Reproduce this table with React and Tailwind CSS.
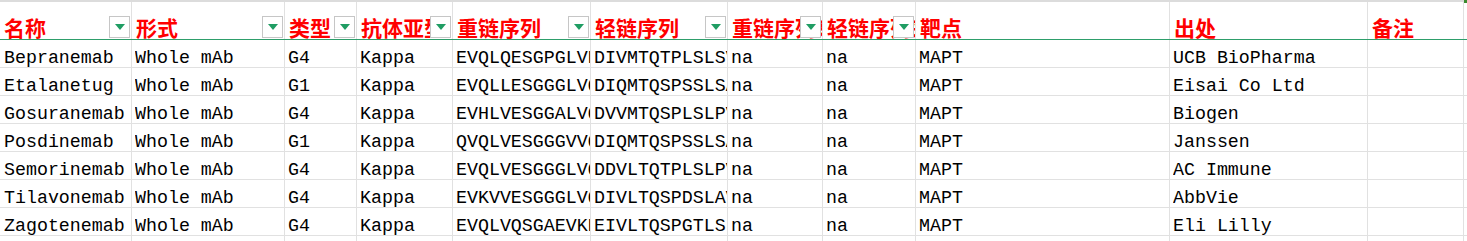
import React from "react";

const headers = [
  { label: "名称", filter: true },
  { label: "形式", filter: true },
  { label: "类型", filter: true },
  { label: "抗体亚型", filter: true },
  { label: "重链序列", filter: true },
  { label: "轻链序列", filter: true },
  { label: "重链序列来源", filter: true },
  { label: "轻链序列来源", filter: true },
  { label: "靶点", filter: false },
  { label: "出处", filter: false },
  { label: "备注", filter: false },
];

const rows = [
  ["Bepranemab", "Whole mAb", "G4", "Kappa", "EVQLQESGPGLVKPSETLSLTCTVSG", "DIVMTQTPLSLSVTPGQPASISCRSS", "na", "na", "MAPT", "UCB BioPharma", ""],
  ["Etalanetug", "Whole mAb", "G1", "Kappa", "EVQLLESGGGLVQPGGSLRLSCAASG", "DIQMTQSPSSLSASVGDRVTITCRAS", "na", "na", "MAPT", "Eisai Co Ltd", ""],
  ["Gosuranemab", "Whole mAb", "G4", "Kappa", "EVHLVESGGALVQPGGSLRLSCAASG", "DVVMTQSPLSLPVTLGQPASISCRSS", "na", "na", "MAPT", "Biogen", ""],
  ["Posdinemab", "Whole mAb", "G1", "Kappa", "QVQLVESGGGVVQPGRSLRLSCAASG", "DIQMTQSPSSLSASVGDRVTITCRAS", "na", "na", "MAPT", "Janssen", ""],
  ["Semorinemab", "Whole mAb", "G4", "Kappa", "EVQLVESGGGLVQPGGSLRLSCAASG", "DDVLTQTPLSLPVNLGDQASISCRSS", "na", "na", "MAPT", "AC Immune", ""],
  ["Tilavonemab", "Whole mAb", "G4", "Kappa", "EVKVVESGGGLVQPGGSMKLSCVASG", "DIVLTQSPDSLAVSLGERATINCKSS", "na", "na", "MAPT", "AbbVie", ""],
  ["Zagotenemab", "Whole mAb", "G4", "Kappa", "EVQLVQSGAEVKKPGSSVKVSCKASG", "EIVLTQSPGTLSLSPGERATLSCRAS", "na", "na", "MAPT", "Eli Lilly", ""],
];

const grid =
  "grid grid-cols-[132px_153px_72px_96px_138px_137px_95px_93px_254px_198px_96px_3px]";

function FilterButton() {
  return (
    <div className="absolute right-[1px] bottom-[1px] w-[21px] h-[22px] bg-white border border-[#c6c6c6] flex items-center justify-center">
      <svg width="10" height="6" viewBox="0 0 10 6">
        <path d="M0 0 L10 0 L5 6 Z" fill="#1f9d63" />
      </svg>
    </div>
  );
}

export default function App() {
  return (
    <div className="w-[1467px] h-[241px] overflow-hidden bg-white">
      {/* header */}
      <div className={`${grid} h-[40px] border-t-2 border-[#dcdcdc] border-b border-b-[#2e9e6b]`}>
        {headers.map((h, i) => (
          <div
            key={i}
            className="relative overflow-hidden whitespace-nowrap border-r border-[#e1e1e1] flex items-end pl-[4px]"
          >
            <span className="text-[21px] leading-[24px] font-bold text-[#ff0000] font-['Noto_Sans_CJK_SC',sans-serif]">
              {h.label}
            </span>
            {h.filter && <FilterButton />}
          </div>
        ))}
        <div className="relative">
          <div className="absolute top-[-2px] left-0 w-[3px] h-[3px] bg-[#3a8a2e]" />
        </div>
      </div>

      {/* rows */}
      {rows.map((r, ri) => (
        <div key={ri} className={`${grid} h-[28px] border-b border-[#e1e1e1]`}>
          {r.map((c, ci) => (
            <div
              key={ci}
              className={`min-w-0 overflow-hidden whitespace-nowrap border-r border-[#e1e1e1] flex items-end ${
                ci === 0 ? "pl-[4px]" : "pl-[3px]"
              }`}
            >
              <span className="block min-w-0 overflow-hidden text-[18.3px] leading-[18px] text-black font-['Liberation_Mono',monospace]">
                {c}
              </span>
            </div>
          ))}
          <div />
        </div>
      ))}
      <div className={`${grid} h-[20px]`}>
        {headers.map((_, i) => (
          <div key={i} className="border-r border-[#e1e1e1]" />
        ))}
        <div />
      </div>
    </div>
  );
}
